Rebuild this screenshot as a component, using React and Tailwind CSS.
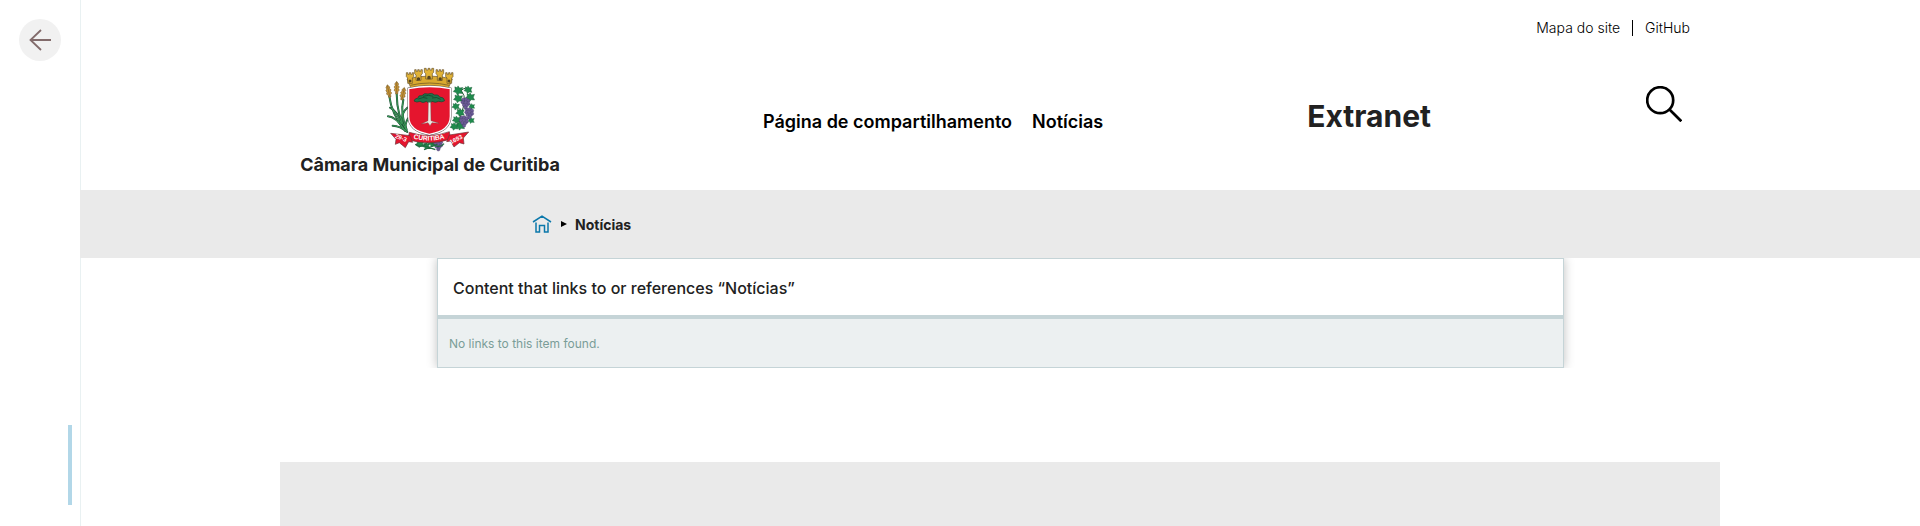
function Leaf({ x, y, s = 1 }) {
  return (
    <path
      transform={`translate(${x} ${y}) scale(${s})`}
      d="M0-14L5-7L15-9L11 1L15 10L4 9L-2 15L-6 7L-15 4L-9-3L-10-11L-3-8Z"
      fill="#1f8a4c"
      stroke="#1d5a38"
      strokeWidth="1.5"
    />
  );
}

const leaves = [
  [262, 90, 0.95], [292, 88, 0.8], [298, 110, 0.9], [262, 114, 0.9], [255, 138, 0.75],
  [303, 138, 0.6], [268, 156, 0.85], [257, 178, 0.8], [301, 180, 0.65], [268, 196, 0.9], [250, 198, 0.8],
  [147, 250, 0.8], [166, 256, 0.7], [184, 248, 0.8],
];
const bunches = [[285, 128], [296, 158], [280, 182], [203, 253]];
const berries = [[-7, -10], [1, -11], [8, -7], [-9, -2], [0, -2], [8, 2], [-5, 6], [3, 7], [0, 14]];
const towers = [
  [107, 37, 22], [132, 28, 23], [161, 24, 28], [196, 28, 23], [225, 37, 22],
];
const wheat = [[54, 93, -12], [78, 83, 0], [97, 101, 12]];

function Crest() {
  return (
    <svg viewBox="40 20 276 258" className="h-[86px] w-[92px]" role="img" aria-label="Brasão de Curitiba">
      <g fill="none" stroke="#1d5336" strokeWidth="6" strokeLinecap="round">
        <path d="M56 108Q62 160 104 212M78 100Q79 170 108 210M98 118Q88 160 108 208" />
        <path d="M58 142Q80 152 92 190M52 168Q76 170 98 205M110 142Q92 156 93 188M118 168Q104 180 104 206M66 196Q88 196 110 215" />
      </g>
      <g fill="none" stroke="#3b9a58" strokeWidth="3" strokeLinecap="round">
        <path d="M56 108Q62 160 104 212M78 100Q79 170 108 210M98 118Q88 160 108 208" />
        <path d="M58 142Q80 152 92 190M52 168Q76 170 98 205M110 142Q92 156 93 188M118 168Q104 180 104 206M66 196Q88 196 110 215" />
      </g>
      <g fill="#c99536" stroke="#6e5426" strokeWidth="1.5">
        {wheat.map(([x, y, angle]) => (
          <g key={x} transform={`translate(${x} ${y}) rotate(${angle})`}>
            <path d="M0-20L6-12L4-8L8-3L5 1L8 7L4 10L3 18H-3L-4 10L-8 7L-5 1L-8-3L-4-8L-6-12Z" />
            <path d="M0-18V16" />
          </g>
        ))}
      </g>
      <path d="M262 84Q290 100 278 140T262 198M270 92Q286 76 296 90" fill="none" stroke="#285b38" strokeWidth="3" />
      {leaves.map(([x, y, s]) => <Leaf key={`${x}-${y}`} x={x} y={y} s={s} />)}
      <g fill="#6c5b98" stroke="#453a68" strokeWidth="1.2">
        {bunches.map(([bx, by]) => (
          <g key={bx} transform={`translate(${bx} ${by})`}>
            {berries.map(([x, y]) => <circle key={`${x}-${y}`} cx={x} cy={y} r="5" />)}
          </g>
        ))}
      </g>

      <path d="M109 56Q176 38 245 56L232 86Q176 72 122 86Z" fill="#d9a92f" stroke="#66502a" strokeWidth="2" />
      <g fill="#e0b236" stroke="#66502a" strokeWidth="2">
        {towers.map(([x, y, w]) => (
          <path
            key={x}
            d={`M${x} ${y}h${w / 5}v5h${w / 5}v-5h${w / 5}v5h${w / 5}v-5h${w / 5}v12l-4 4v16h-${w - 8}v-16l-4-4z`}
          />
        ))}
      </g>
      <g fill="#54431f">
        <path d="M114 67V60Q118 55 122 60V65ZM139 61V53Q143 48 148 53V60ZM170 57V49Q175 43 180 49V57ZM204 60V53Q209 48 213 53V61ZM231 65V60Q235 55 239 60V67Z" />
      </g>
      <path d="M119 75Q176 61 235 75" fill="none" stroke="#8b6d28" strokeWidth="3" />

      <path d="M114 85Q176 72 239 85V168Q239 212 176 222Q114 212 114 168Z" fill="#e5152e" stroke="#5d5257" strokeWidth="7" />
      <path d="M114 85Q176 72 239 85V168Q239 212 176 222Q114 212 114 168Z" fill="#e5152e" stroke="#fff" strokeWidth="4" />
      <path
        d="M130 122Q132 114 142 113Q142 104 154 106Q160 97 172 101Q184 96 192 104Q203 101 207 110Q220 110 222 121Q214 127 204 123Q194 129 184 123L179 128H173L168 123Q156 130 148 123Q138 128 130 122Z"
        fill="#22744a"
        stroke="#16432d"
        strokeWidth="2"
      />
      <path d="M143 116Q158 108 170 114M184 113Q198 108 210 117M157 108Q174 102 188 108" fill="none" stroke="#123b27" strokeWidth="2" />
      <path d="M173 126H180L181 181L205 189L184 187L178 196L172 187L152 191L172 181Z" fill="#ede9e4" stroke="#72494b" strokeWidth="1.2" />

      <path d="M176 242Q150 268 134 252M176 242Q204 270 220 250M160 268L200 252M194 268L154 254" fill="none" stroke="#226b41" strokeWidth="4" />
      <path d="M116 216Q176 236 236 214L240 236Q176 258 112 238Z" fill="#e5152e" stroke="#69343a" strokeWidth="2" />
      <path d="M60 219L118 226L126 246L114 244L104 262L86 247L74 252L76 237Z" fill="#e5152e" stroke="#69343a" strokeWidth="2" />
      <path d="M294 215L236 224L228 244L240 242L250 260L266 247L280 251L278 233Z" fill="#e5152e" stroke="#69343a" strokeWidth="2" />
      <path id="crest-name" d="M128 234Q176 248 228 233" fill="none" />
      <path id="crest-day" d="M72 232L114 248" fill="none" />
      <path id="crest-year" d="M241 252L284 230" fill="none" />
      <g fill="#fff" className="font-['Liberation_Sans',sans-serif] text-[18px] font-bold">
        <text className="text-[20px]"><textPath href="#crest-name">CURITIBA</textPath></text>
        <text><textPath href="#crest-day">29-3</textPath></text>
        <text><textPath href="#crest-year">1693</textPath></text>
      </g>
    </svg>
  );
}

export default function App() {
  return (
    <div className="flex min-h-screen bg-white font-[Inter,sans-serif] text-[#212121]">
      <aside className="flex w-20 shrink-0 flex-col justify-between pb-[21px] pt-[19px]">
        <button aria-label="Voltar" className="ml-[19px] flex size-[42px] items-center justify-center rounded-full bg-[#f1f1f1]">
          <svg viewBox="0 0 24 24" className="size-6" fill="none" stroke="#826b6b" strokeWidth="1.8">
            <path d="M23 12H2M13 2L2.5 12L13 22" />
          </svg>
        </button>
        <div className="mr-2 h-20 w-1 self-end bg-[#b2d7e8]" />
      </aside>

      <div className="flex min-w-0 grow flex-col shadow-[inset_1px_0_#e9f1f2]">
        <header className="mx-auto h-[190px] w-full max-w-[1440px]">
          <nav aria-label="Links" className="flex h-[54px] items-center justify-end pr-[30px] pt-[2px] text-sm font-light text-black">
            <a href="#mapa" className="border-r border-black pr-3 leading-4">Mapa do site</a>
            <a href="#github" className="pl-3 leading-4">GitHub</a>
          </nav>
          <div className="flex items-start">
            <a href="#inicio" className="ml-5 mt-[13px] flex w-[260px] flex-col items-center">
              <Crest />
              <span className="whitespace-nowrap text-lg font-bold leading-6">Câmara Municipal de Curitiba</span>
            </a>
            <nav aria-label="Principal" className="ml-[203px] mt-[54px] flex gap-5 whitespace-nowrap text-lg font-semibold leading-7 text-black">
              <a href="#compartilhamento">Página de compartilhamento</a>
              <a href="#noticias">Notícias</a>
            </nav>
            <div className="ml-auto mr-[38px] mt-8 flex items-start gap-[215px]">
              <span className="pt-[10px] text-3xl font-bold leading-10">Extranet</span>
              <button aria-label="Buscar">
                <svg viewBox="0 0 36 36" className="size-9" fill="none" stroke="#000" strokeWidth="2.7">
                  <circle cx="14.2" cy="14.2" r="13" />
                  <path d="M23.5 23.5L35.3 35.3" />
                </svg>
              </button>
            </div>
          </div>
        </header>

        <nav aria-label="Trilha" className="flex h-[68px] items-center bg-[#eaeaea] pl-[452px] text-sm font-bold">
          <a href="#home" aria-label="Início">
            <svg viewBox="0 0 20 18" className="h-[18px] w-5" fill="none" stroke="#0b78ab" strokeWidth="1.5">
              <path d="M1 7L10 1.2L19 7M4 7.5V17H7.5V10.5H12.5V17H16V7.5" />
            </svg>
          </a>
          <svg viewBox="0 0 6 6" className="ml-[9px] mr-2 size-[6px]" aria-hidden="true">
            <path d="M0 0L6 3L0 6Z" fill="#000" />
          </svg>
          <span className="pt-[2px]">Notícias</span>
        </nav>

        <main className="overflow-hidden pl-[357px] pr-[356px]">
          <section className="border border-[#c5d4d7] shadow-[0_0_10px_rgba(0,0,0,0.25)]">
            <h1 className="border-b-4 border-[#c5d4d7] bg-white px-[15px] pb-[15px] pt-[17px] text-base font-medium leading-6">
              Content that links to or references “Notícias”
            </h1>
            <p className="bg-[#ecf0f1] px-[11px] pb-[15px] pt-[17px] text-xs font-normal leading-4 text-[#7a9d98]">No links to this item found.</p>
          </section>
        </main>

        <footer className="mx-auto mt-[94px] w-full max-w-[1440px] grow bg-[#eaeaea]" />
      </div>
    </div>
  );
}
